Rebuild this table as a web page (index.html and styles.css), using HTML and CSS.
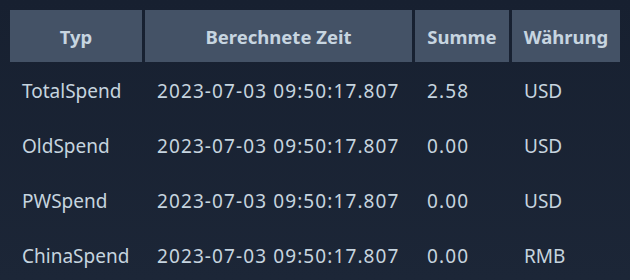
FILE: index.html
```html
<!DOCTYPE html>
<html lang="de">
<head>
<meta charset="utf-8">
<title>Ausgaben</title>
<link rel="stylesheet" href="styles.css">
</head>
<body>
<div class="table">
  <div class="th">Typ</div>
  <div class="th">Berechnete Zeit</div>
  <div class="th">Summe</div>
  <div class="th">Währung</div>

  <div class="td">TotalSpend</div>
  <div class="td num">2023-07-03 09:50:17.807</div>
  <div class="td num">2.58</div>
  <div class="td">USD</div>

  <div class="td">OldSpend</div>
  <div class="td num">2023-07-03 09:50:17.807</div>
  <div class="td num">0.00</div>
  <div class="td">USD</div>

  <div class="td">PWSpend</div>
  <div class="td num">2023-07-03 09:50:17.807</div>
  <div class="td num">0.00</div>
  <div class="td">USD</div>

  <div class="td">ChinaSpend</div>
  <div class="td num">2023-07-03 09:50:17.807</div>
  <div class="td num">0.00</div>
  <div class="td">RMB</div>
</div>
</body>
</html>
```

FILE: styles.css
```css
html, body {
  margin: 0;
  height: 100%;
}
body {
  background: linear-gradient(180deg, #172030 0%, #1c2637 100%);
  font-family: "Noto Sans", "Open Sans", sans-serif;
  color: #c6d4df;
  padding: 10px;
  box-sizing: border-box;
}
.table {
  display: grid;
  grid-template-columns: 132px 267px 94px 108px;
  grid-auto-rows: 52px;
  gap: 3px;
}
.th {
  background: #445266;
  font-weight: bold;
  font-size: 18.5px;
  display: flex;
  align-items: center;
  justify-content: center;
  color: #c7d5e0;
}
.td {
  font-size: 19px;
  padding-left: 12px;
  display: flex;
  align-items: center;
  color: #c6d4df;
}
.num {
  letter-spacing: 1.1px;
}
```
